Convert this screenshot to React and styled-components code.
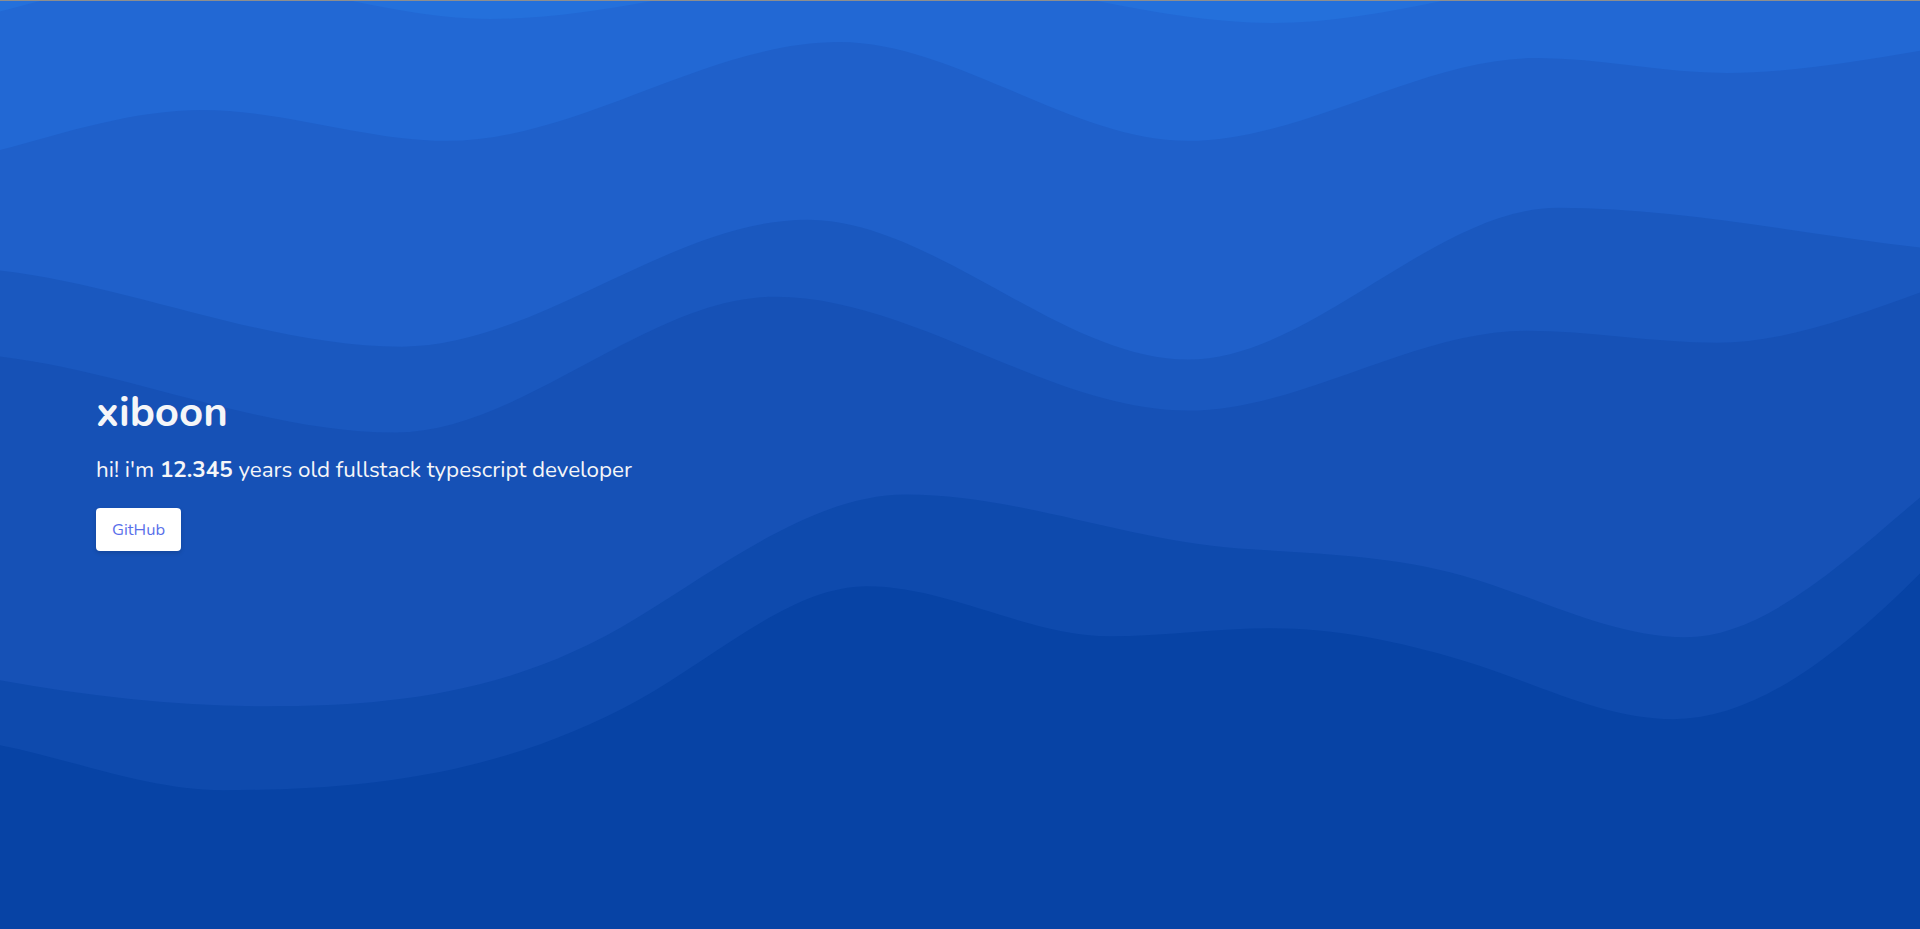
import React from 'react';
import styled, { createGlobalStyle } from 'styled-components';

const GlobalStyle = createGlobalStyle`
  * {
    box-sizing: border-box;
  }

  html, body {
    margin: 0;
    padding: 0;
  }

  body {
    font-family: "Nunito", "Noto Sans", "Open Sans", sans-serif;
    background: #0743a5;
    overflow: hidden;
  }
`;

// wave boundaries, top to bottom: [x, y, slope] (slope defaults to 0 at crests/troughs)
const waves = [
    {
        color: '#2268d4',
        points: [[-100, 25], [180, -25], [490, 18], [880, -30], [1273, 22], [1650, -30], [2020, 0]]
    },
    {
        color: '#1f60ca',
        points: [[-150, 175], [202, 109], [447, 140], [839, 41], [1188, 140], [1537, 57], [1727, 72], [2100, 30]]
    },
    {
        color: '#1a58bf',
        points: [[-60, 266], [402, 346], [807, 219], [1188, 359], [1558, 207], [2050, 255]]
    },
    {
        color: '#1651b6',
        points: [[-60, 352], [395, 432], [775, 296], [1188, 410], [1526, 330], [1717, 342], [2100, 250]]
    },
    {
        color: '#0e4aad',
        points: [[0, 680, 0.18], [268, 706], [638, 617, -0.62], [906, 494], [1239, 548, 0.07], [1462, 575, 0.28], [1685, 637], [1920, 497, -0.85]]
    },
    {
        color: '#0743a5',
        points: [[0, 745, 0.2], [223, 790], [638, 700, -0.55], [867, 586], [1110, 636], [1271, 628], [1462, 660, 0.3], [1673, 719], [1920, 573, -1]]
    }
];

const wavePath = pts => {
    let d = `M${pts[0][0]},${pts[0][1]}`;
    for (let i = 0; i < pts.length - 1; i++) {
        const [x0, y0, m0 = 0] = pts[i];
        const [x1, y1, m1 = 0] = pts[i + 1];
        const h = (x1 - x0) / 3;
        d += ` C${x0 + h},${y0 + m0 * h} ${x1 - h},${y1 - m1 * h} ${x1},${y1}`;
    }
    const first = pts[0][0];
    const last = pts[pts.length - 1][0];
    return `${d} L${last},929 L${first},929 Z`;
};

const WaveBackground = () => (
    <Waves viewBox="0 0 1920 929" preserveAspectRatio="none">
        <rect x="0" y="0" width="1920" height="929" fill="#2470db" />
        {waves.map(w => (
            <path key={w.color} d={wavePath(w.points)} fill={w.color} />
        ))}
    </Waves>
);

export default function App() {
    return (
        <>
            <GlobalStyle />
            <Page>
                <WaveBackground />
                <Hero>
                    <Title>xiboon</Title>
                    <Intro>
                        hi! i'm <strong>12.345</strong> years old fullstack typescript developer
                    </Intro>
                    <GithubButton href="#">GitHub</GithubButton>
                </Hero>
            </Page>
        </>
    );
}

const Page = styled.main`
    position: relative;
    height: 100vh;
    border-top: 1px solid #8e8e8e;
    background: #2470db;
    overflow: hidden;
`

const Waves = styled.svg`
    position: absolute;
    inset: 0;
    width: 100%;
    height: 100%;
    display: block;
`

const Hero = styled.section`
    position: relative;
    height: 100%;
    display: flex;
    flex-direction: column;
    justify-content: center;
    align-items: flex-start;
    padding: 8px 96px 0;
    color: #f5f6f8;
`

const Title = styled.h1`
    margin: 0;
    font-size: 42px;
    line-height: 50px;
    font-weight: 700;
`

const Intro = styled.p`
    margin: 15px 0 0;
    font-size: 22.4px;
    line-height: 34px;

    strong {
        font-weight: 700;
    }
`

const GithubButton = styled.a`
    margin-top: 21px;
    height: 43px;
    padding: 0 16px;
    display: inline-flex;
    align-items: center;
    background: #ffffff;
    color: #5a6fea;
    border-radius: 4px;
    font-size: 16.5px;
    font-weight: 400;
    text-decoration: none;
    box-shadow: 0 2px 4px rgba(0, 0, 0, 0.15);
`
